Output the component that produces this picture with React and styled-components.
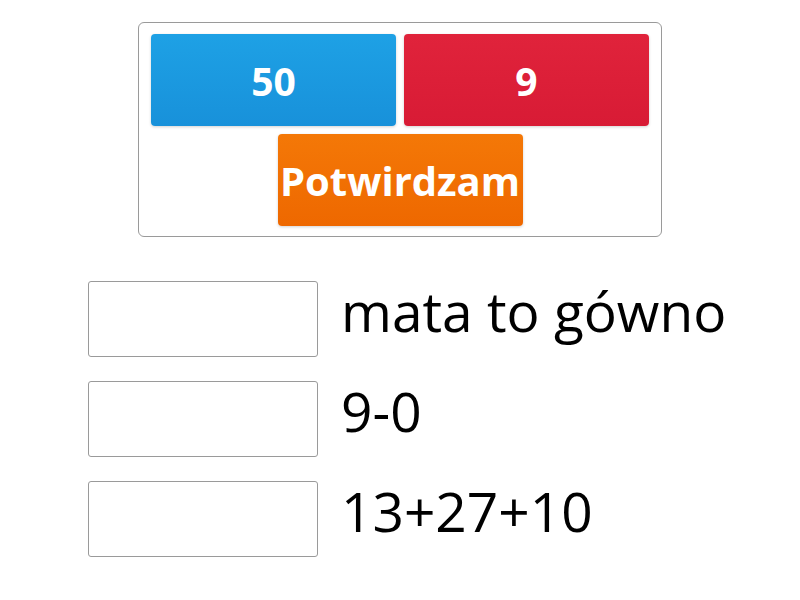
import React from "react";
import styled, { createGlobalStyle } from "styled-components";

const GlobalStyle = createGlobalStyle`
  body {
    margin: 0;
    background: #fff;
    font-family: "Open Sans", "Liberation Sans", sans-serif;
  }
`;

const Page = styled.div`
  width: 800px;
  height: 600px;
  padding-top: 22px;
  box-sizing: border-box;
  display: flex;
  flex-direction: column;
`;

const AnswerBox = styled.div`
  align-self: center;
  width: 524px;
  box-sizing: border-box;
  border: 1px solid #9a9a9a;
  border-radius: 6px;
  padding: 11px 11px 10px;
  display: flex;
  flex-wrap: wrap;
  justify-content: center;
  gap: 8px;
`;

const colors = {
  blue: ["#1ea1e5", "#1891da"],
  red: ["#e0233b", "#d81b35"],
  orange: ["#f47807", "#ee6800"],
};

const Tile = styled.button`
  width: 245px;
  height: 92px;
  border: none;
  border-radius: 4px;
  padding: 0;
  background: linear-gradient(
    ${(p) => colors[p.$color][0]},
    ${(p) => colors[p.$color][1]}
  );
  box-shadow: 0 1px 3px rgba(0, 0, 0, 0.18);
  color: #fff;
  font-family: "Open Sans", sans-serif;
  font-weight: 700;
  font-size: ${(p) => p.$size || 39}px;
  display: flex;
  align-items: center;
  justify-content: center;
  white-space: nowrap;
  cursor: pointer;
`;

const Rows = styled.div`
  margin-top: 44px;
  padding-left: 88px;
  display: flex;
  flex-direction: column;
  gap: 24px;
`;

const Row = styled.div`
  display: flex;
  align-items: flex-start;
  gap: 23px;
`;

const DropSlot = styled.div`
  width: 230px;
  height: 76px;
  box-sizing: border-box;
  border: 1px solid #9a9a9a;
  border-radius: 3px;
  background: #fff;
  flex-shrink: 0;
`;

const Label = styled.span`
  font-family: "Open Sans", sans-serif;
  font-size: 55px;
  line-height: 1.1;
  color: #000;
  white-space: nowrap;
`;

const prompts = ["mata to gówno", "9-0", "13+27+10"];

export default function App() {
  return (
    <>
      <GlobalStyle />
      <Page>
        <AnswerBox>
          <Tile $color="blue">50</Tile>
          <Tile $color="red">9</Tile>
          <Tile $color="orange" $size={40}>
            Potwirdzam
          </Tile>
        </AnswerBox>
        <Rows>
          {prompts.map((text) => (
            <Row key={text}>
              <DropSlot />
              <Label>{text}</Label>
            </Row>
          ))}
        </Rows>
      </Page>
    </>
  );
}
